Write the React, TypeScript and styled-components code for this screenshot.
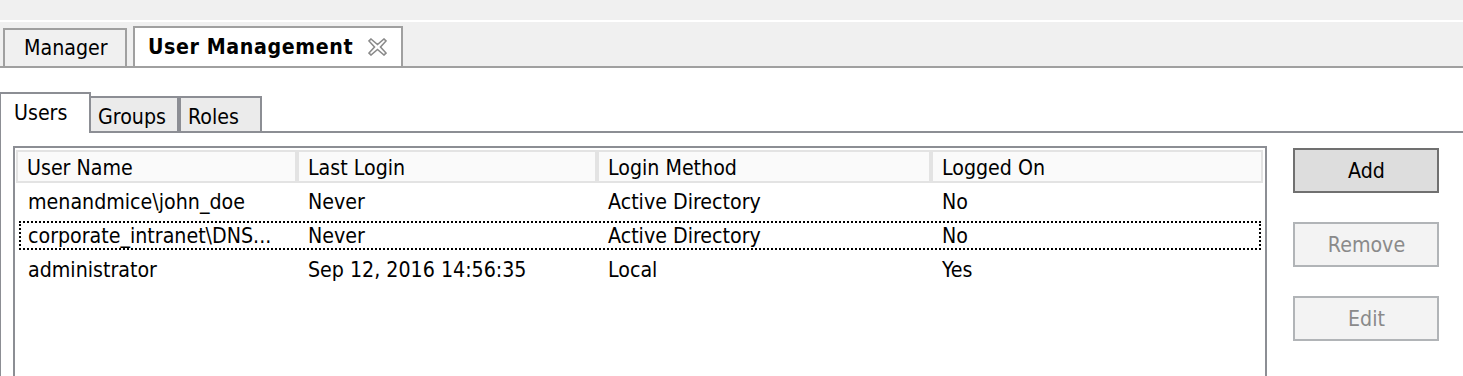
import React from "react";
import styled, { createGlobalStyle } from "styled-components";

const GlobalStyle = createGlobalStyle`
  html, body {
    margin: 0;
    padding: 0;
    background: #ffffff;
    overflow: hidden;
  }
  body {
    font-family: "DejaVu Sans Condensed", "DejaVu Sans", sans-serif;
    font-size: 21.2px;
    color: #000000;
  }
`;

const Window = styled.div`
  display: flex;
  flex-direction: column;
  height: 100vh;
`;

const TopStrip = styled.div`
  flex-shrink: 0;
  height: 20px;
  background: #f0f0f0;
  border-bottom: 2px solid #ffffff;
`;

const EditorTabBar = styled.div`
  flex-shrink: 0;
  display: flex;
  align-items: flex-end;
  gap: 6px;
  height: 44px;
  padding-left: 3px;
  background: #f0f0f0;
  border-bottom: 2px solid #a0a0a0;
`;

const EditorTab = styled.div<{ $active?: boolean }>`
  display: flex;
  align-items: center;
  box-sizing: border-box;
  height: ${(p) => (p.$active ? "40px" : "38px")};
  width: ${(p) => (p.$active ? "270px" : "124px")};
  padding-left: ${(p) => (p.$active ? "13px" : "19px")};
  padding-bottom: ${(p) => (p.$active ? "1px" : "2px")};
  border: 2px solid #a0a0a0;
  border-bottom: none;
  background: ${(p) => (p.$active ? "#ffffff" : "#f0f0f0")};
  font-weight: ${(p) => (p.$active ? "bold" : "normal")};
  letter-spacing: ${(p) => (p.$active ? "0.6px" : "0")};
  white-space: nowrap;
`;

const CloseIcon = styled.svg`
  margin-left: auto;
  margin-right: 14px;
  flex-shrink: 0;
`;

const Body = styled.div`
  flex: 1;
  min-height: 0;
  display: flex;
  flex-direction: column;
  padding-top: 24px;
`;

const SubTabBar = styled.div`
  flex-shrink: 0;
  display: flex;
  align-items: flex-end;
  height: 41px;
`;

const SubTab = styled.div<{ $active?: boolean; $width: number; $leftBorder: number }>`
  box-sizing: border-box;
  width: ${(p) => p.$width}px;
  height: ${(p) => (p.$active ? "41px" : "37px")};
  display: flex;
  align-items: center;
  padding-left: ${(p) => (p.$active ? "13px" : "7px")};
  padding-bottom: ${(p) => (p.$active ? "3px" : "0")};
  padding-top: ${(p) => (p.$active ? "0" : "3px")};
  background: ${(p) => (p.$active ? "#ffffff" : "#ebebeb")};
  border: 2px solid #8c8e94;
  border-left-width: ${(p) => p.$leftBorder}px;
  border-bottom: ${(p) => (p.$active ? "none" : "2px solid #8c8e94")};
`;

const SubTabFill = styled.div`
  flex: 1;
  border-bottom: 2px solid #8c8e94;
`;

const Panel = styled.div`
  flex: 1;
  display: flex;
  align-items: flex-start;
  border-left: 1px solid #8c8e94;
  padding: 13px 24px 0 12px;
`;

const Table = styled.div`
  box-sizing: border-box;
  flex-shrink: 0;
  width: 1254px;
  height: 400px;
  border: 2px solid #8c8e94;
  padding: 2px 2px 0 1px;
`;

const HeaderRow = styled.div`
  display: grid;
  grid-template-columns: 281px 300px 334px 1fr;
`;

const HeaderCell = styled.div`
  box-sizing: border-box;
  height: 33px;
  display: flex;
  align-items: center;
  padding-left: 9px;
  padding-top: 2px;
  background: #fafafa;
  border: 2px solid #e3e3e3;
  white-space: nowrap;
`;

const Rows = styled.div`
  display: flex;
  flex-direction: column;
  gap: 5px;
  padding: 4px 2px 0 3px;
`;

const Row = styled.div<{ $focused?: boolean }>`
  box-sizing: border-box;
  display: grid;
  grid-template-columns: 276px 300px 334px 1fr;
  height: 29px;
  align-items: center;
  border: 2px ${(p) => (p.$focused ? "dotted #000000" : "solid transparent")};
`;

const Cell = styled.div`
  padding-left: 11px;
  padding-bottom: 1px;
  white-space: nowrap;
  &:first-child {
    padding-left: 7px;
  }
`;

const ButtonColumn = styled.div`
  display: flex;
  flex-direction: column;
  gap: 29px;
  margin-left: 26px;
  padding-top: 2px;
`;

const ActionButton = styled.button<{ $disabled?: boolean }>`
  box-sizing: border-box;
  width: 146px;
  height: 45px;
  font: inherit;
  padding: 0 0 0 1px;
  border: 2px solid ${(p) => (p.$disabled ? "#b1b4b7" : "#707070")};
  background: ${(p) => (p.$disabled ? "#f3f3f3" : "#dddddd")};
  color: ${(p) => (p.$disabled ? "#8a8a8a" : "#000000")};
`;

const users = [
  { name: "menandmice\\john_doe", last: "Never", method: "Active Directory", on: "No" },
  { name: "corporate_intranet\\DNS...", last: "Never", method: "Active Directory", on: "No" },
  { name: "administrator", last: "Sep 12, 2016 14:56:35", method: "Local", on: "Yes" },
];

export default function App() {
  return (
    <Window>
      <GlobalStyle />
      <TopStrip />
      <EditorTabBar>
        <EditorTab>Manager</EditorTab>
        <EditorTab $active>
          User Management
          <CloseIcon width="19" height="18" viewBox="0 0 19 18">
            <path
              d="M3 1 L9.5 6.5 L16 1 L18 3 L12.5 9 L18 15 L16 17 L9.5 11.5 L3 17 L1 15 L6.5 9 L1 3 Z"
              fill="#ffffff"
              stroke="#8a8a8a"
              strokeWidth="1.6"
              strokeLinejoin="miter"
            />
          </CloseIcon>
        </EditorTab>
      </EditorTabBar>
      <Body>
        <SubTabBar>
          <SubTab $active $width={91} $leftBorder={1}>Users</SubTab>
          <SubTab $width={88} $leftBorder={0}>Groups</SubTab>
          <SubTab $width={83} $leftBorder={2}>Roles</SubTab>
          <SubTabFill />
        </SubTabBar>
        <Panel>
          <Table>
            <HeaderRow>
              <HeaderCell>User Name</HeaderCell>
              <HeaderCell>Last Login</HeaderCell>
              <HeaderCell>Login Method</HeaderCell>
              <HeaderCell>Logged On</HeaderCell>
            </HeaderRow>
            <Rows>
              {users.map((u, i) => (
                <Row key={u.name} $focused={i === 1}>
                  <Cell>{u.name}</Cell>
                  <Cell>{u.last}</Cell>
                  <Cell>{u.method}</Cell>
                  <Cell>{u.on}</Cell>
                </Row>
              ))}
            </Rows>
          </Table>
          <ButtonColumn>
            <ActionButton>Add</ActionButton>
            <ActionButton $disabled>Remove</ActionButton>
            <ActionButton $disabled>Edit</ActionButton>
          </ButtonColumn>
        </Panel>
      </Body>
    </Window>
  );
}
